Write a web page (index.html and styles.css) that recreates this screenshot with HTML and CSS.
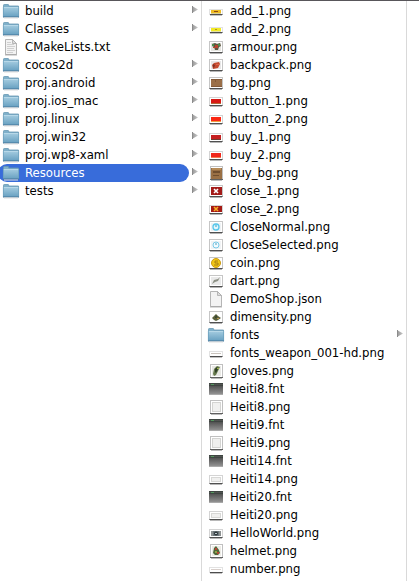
FILE: index.html
```
<!DOCTYPE html>
<html lang="en">
<head>
<meta charset="utf-8">
<title>Resources</title>
<link rel="stylesheet" href="styles.css">
</head>
<body>
<svg class="defs" aria-hidden="true">
  <defs>
    <linearGradient id="blue" x1="0" y1="0" x2="0" y2="1"><stop offset="0" stop-color="#a5cce0"/><stop offset="1" stop-color="#669fc0"/></linearGradient>
    <linearGradient id="dark" x1="0" y1="0" x2="0" y2="1"><stop offset="0" stop-color="#505050"/><stop offset=".3" stop-color="#555"/><stop offset="1" stop-color="#929292"/></linearGradient>
    <linearGradient id="grey" x1="0" y1="0" x2="1" y2="0"><stop offset="0" stop-color="#969696"/><stop offset="1" stop-color="#c8c8c8"/></linearGradient>
    <g id="folder">
      <path d="M1.500 5V3.200Q1.500 2.500 2.200 2.500H6Q6.700 2.500 6.700 3.200V4H16.500V6H1.500Z" fill="#7fb0ca" stroke="#6798b3" stroke-width=".8"/>
      <path d="M1 5H17V15H1Z" fill="url(#blue)"/>
      <path d="M1 5.500H17" stroke="#b7d8e8"/>
      <path d="M1.400 5V15M16.600 5V15" stroke="#6c9fbd" stroke-width=".8"/>
      <path d="M1 15H17" stroke="#47779a"/>
      <path d="M2 16H16" stroke="#ddd"/>
    </g>
    <g id="doc">
      <path d="M3.500 1.500H10.500L14.500 5.500V16.500H3.500Z" fill="#f3f3f3" stroke="#b5b5b5"/>
      <path d="M10.500 1.500V5.500H14.500Z" fill="#ddd" stroke="#aaa" stroke-width=".8"/>
      <path d="M3 17H15" stroke="#999" stroke-width=".7"/>
    </g>
    <g id="fnt">
      <rect x="2" y="3" width="14" height="11" fill="url(#dark)"/>
      <path d="M2 3.500H16M2 5.500H16" stroke="#3e4641"/>
      <path d="M4 4.500H7" stroke="#55985f"/>
      <path d="M2 14.500H16" stroke="#aaa"/>
    </g>
    <g id="thin"><rect x="2.500" y="7.500" width="13" height="5" fill="#fff" stroke="#e2e2e2"/><path d="M3 12.500H15.500" stroke="#4c4c4c"/><path d="M3 13.500H15" stroke="#c4c4c4"/></g>
    <g id="low"><rect x="2.500" y="5.500" width="13" height="8" fill="#fff" stroke="#d4d4d4"/><path d="M2.500 13.500H15.500" stroke="#505050"/><path d="M3 14.500H15" stroke="#b8b8b8"/></g>
    <g id="mid"><rect x="2.500" y="3.500" width="13" height="11" fill="#fff" stroke="#c6c6c6"/><path d="M2.500 14.500H15.500" stroke="#505050"/><path d="M3 15.500H15" stroke="#b4b4b4"/></g>
    <g id="tall"><rect x="3.500" y="2.500" width="12" height="13" fill="#fff" stroke="#c0c0c0"/><path d="M3 15.500H16" stroke="#606060"/><path d="M4 16.500H15" stroke="#bcbcbc"/></g>
    <g id="arrow"><path d="M0 0L6 3.500L0 7Z" fill="url(#grey)"/><path d="M.5 0V7" stroke="#8c8c8c"/></g>
  </defs>
</svg>
<main class="browser">
  <ul class="column parent">
    <li><svg class="icon" viewBox="0 0 18 18"><use href="#folder"/></svg><span>build</span><svg class="arrow" viewBox="0 0 7 7"><use href="#arrow"/></svg></li>
    <li><svg class="icon" viewBox="0 0 18 18"><use href="#folder"/></svg><span>Classes</span><svg class="arrow" viewBox="0 0 7 7"><use href="#arrow"/></svg></li>
    <li><svg class="icon" viewBox="0 0 18 18"><use href="#doc"/><path d="M5 4.500H9M5 6.500H12M5 8.500H13M5 10.500H12M5 12.500H13M5 14.500H11" stroke="#d0d0d0"/></svg><span>CMakeLists.txt</span></li>
    <li><svg class="icon" viewBox="0 0 18 18"><use href="#folder"/></svg><span>cocos2d</span><svg class="arrow" viewBox="0 0 7 7"><use href="#arrow"/></svg></li>
    <li><svg class="icon" viewBox="0 0 18 18"><use href="#folder"/></svg><span>proj.android</span><svg class="arrow" viewBox="0 0 7 7"><use href="#arrow"/></svg></li>
    <li><svg class="icon" viewBox="0 0 18 18"><use href="#folder"/></svg><span>proj.ios_mac</span><svg class="arrow" viewBox="0 0 7 7"><use href="#arrow"/></svg></li>
    <li><svg class="icon" viewBox="0 0 18 18"><use href="#folder"/></svg><span>proj.linux</span><svg class="arrow" viewBox="0 0 7 7"><use href="#arrow"/></svg></li>
    <li><svg class="icon" viewBox="0 0 18 18"><use href="#folder"/></svg><span>proj.win32</span><svg class="arrow" viewBox="0 0 7 7"><use href="#arrow"/></svg></li>
    <li><svg class="icon" viewBox="0 0 18 18"><use href="#folder"/></svg><span>proj.wp8-xaml</span><svg class="arrow" viewBox="0 0 7 7"><use href="#arrow"/></svg></li>
    <li><div class="selected"><svg class="icon" viewBox="0 0 18 18"><use href="#folder"/></svg><span>Resources</span></div><svg class="arrow" viewBox="0 0 7 7"><use href="#arrow"/></svg></li>
    <li><svg class="icon" viewBox="0 0 18 18"><use href="#folder"/></svg><span>tests</span><svg class="arrow" viewBox="0 0 7 7"><use href="#arrow"/></svg></li>
  </ul>
  <ul class="column files">
    <li><svg class="icon" viewBox="0 0 18 18"><use href="#thin"/><path d="M4 8h10v3H4z" fill="#eebb22"/><path d="M7 9h4v1H7z" fill="#8f4a12"/><path d="M4 11h10v1H4z" fill="#d9cf9a"/></svg><span>add_1.png</span></li>
    <li><svg class="icon" viewBox="0 0 18 18"><use href="#thin"/><path d="M4 8h10v3H4z" fill="#f2ea25"/><path d="M8 9h2v1H8z" fill="#b3951b"/><path d="M4 11h10v1H4z" fill="#e6e3a4"/></svg><span>add_2.png</span></li>
    <li><svg class="icon" viewBox="0 0 18 18"><use href="#mid"/><path d="M4 5h10v8H4z" fill="#e5e4df"/><path d="M5 6l3-1 2 1 3-1 1 3-2 1-1 3H8L7 9 5 8z" fill="#5b5740"/><path d="M5 6h2v2H5zM11 6h2v2h-2z" fill="#4b8d4a"/><path d="M8 7h3v3H8zM6 9h2v1H6z" fill="#b9442d"/></svg><span>armour.png</span></li>
    <li><svg class="icon" viewBox="0 0 18 18"><use href="#mid"/><path d="M4 5h10v8H4z" fill="#e7e6e6"/><path d="M5 9l2-2 5-1 1 2-2 4-5 1z" fill="#c4492d"/><path d="M6 8l2 1-1 3-1-1z" fill="#7b3026"/><path d="M9 8h3v1H9z" fill="#dd624b"/></svg><span>backpack.png</span></li>
    <li><svg class="icon" viewBox="0 0 18 18"><use href="#mid"/><path d="M4 5h11v8H4z" fill="#9b6f48"/><path d="M4 5h11v1H4zM8 6h1v2H8zM4 12h11v1H4z" fill="#855a38"/></svg><span>bg.png</span></li>
    <li><svg class="icon" viewBox="0 0 18 18"><use href="#low"/><path d="M4 7h10v4H4z" fill="#d81a15"/><path d="M4 11h10v1H4z" fill="#b36b39"/></svg><span>button_1.png</span></li>
    <li><svg class="icon" viewBox="0 0 18 18"><use href="#low"/><path d="M4 7h10v4H4z" fill="#fa2714"/><path d="M4 11h10v1H4z" fill="#f0a043"/></svg><span>button_2.png</span></li>
    <li><svg class="icon" viewBox="0 0 18 18"><use href="#low"/><path d="M4 7h10v4H4z" fill="#c51f20"/><path d="M4 11h10v1H4z" fill="#713b31"/></svg><span>buy_1.png</span></li>
    <li><svg class="icon" viewBox="0 0 18 18"><use href="#low"/><path d="M4 7h10v4H4z" fill="#f1281c"/><path d="M4 11h10v1H4z" fill="#f47b51"/></svg><span>buy_2.png</span></li>
    <li><svg class="icon" viewBox="0 0 18 18"><use href="#tall"/><path d="M4 4h11v11H4z" fill="#9a7045"/><path d="M5 4h9v2H5z" fill="#b88c58"/><path d="M6 7h7v2H6zM6 11h6v1H6z" fill="#704e2e"/></svg><span>buy_bg.png</span></li>
    <li><svg class="icon" viewBox="0 0 18 18"><use href="#mid"/><path d="M4 5h11v8H4z" fill="#a41b19"/><path d="M7 7l4 4M11 7l-4 4" stroke="#fff" stroke-width="1.600"/></svg><span>close_1.png</span></li>
    <li><svg class="icon" viewBox="0 0 18 18"><use href="#low"/><path d="M4 6h11v6H4z" fill="#a51a14"/><path d="M7 7l4 4M11 7l-4 4" stroke="#f9ad28" stroke-width="1.600"/></svg><span>close_2.png</span></li>
    <li><svg class="icon" viewBox="0 0 18 18"><use href="#mid"/><path d="M4 5h10v8H4z" fill="#eef2f4"/><circle cx="9" cy="9" r="3" fill="#e4f7fd" stroke="#54c6ec" stroke-width="1.300"/><path d="M9 7v2" stroke="#329fc0"/></svg><span>CloseNormal.png</span></li>
    <li><svg class="icon" viewBox="0 0 18 18"><use href="#mid"/><path d="M4 5h10v8H4z" fill="#f1f3f5"/><circle cx="9" cy="9" r="3" fill="#f1fbff" stroke="#79c9e8"/><path d="M9 7v2" stroke="#529ebd"/></svg><span>CloseSelected.png</span></li>
    <li><svg class="icon" viewBox="0 0 18 18"><use href="#mid"/><circle cx="9" cy="9" r="4.500" fill="#f1c716" stroke="#cc9a12"/><path d="M11 7H8v2h3v2H7" fill="none" stroke="#a67e14"/></svg><span>coin.png</span></li>
    <li><svg class="icon" viewBox="0 0 18 18"><use href="#mid"/><path d="M4 5h10v8H4z" fill="#e9e9e9"/><path d="M5 12l2-4 4-1 2-2-2 4-3 1z" fill="#8c9084"/></svg><span>dart.png</span></li>
    <li><svg class="icon" viewBox="0 0 18 18"><use href="#doc"/></svg><span>DemoShop.json</span></li>
    <li><svg class="icon" viewBox="0 0 18 18"><use href="#mid"/><path d="M5 10l2-2 2-2 2 2 3 2-3 2-2 1-2-1z" fill="#59603b"/><path d="M9 7l1 2-1 1H8z" fill="#303e2f"/><path d="M10 10h2v1h-2z" fill="#b69552"/></svg><span>dimensity.png</span></li>
    <li><svg class="icon" viewBox="0 0 18 18"><use href="#folder"/></svg><span>fonts</span><svg class="arrow" viewBox="0 0 7 7"><use href="#arrow"/></svg></li>
    <li><svg class="icon" viewBox="0 0 18 18"><use href="#thin"/><path d="M4 9.500H14" stroke="#c9c3bd"/></svg><span>fonts_weapon_001-hd.png</span></li>
    <li><svg class="icon" viewBox="0 0 18 18"><use href="#tall"/><path d="M5 4h9v10H5z" fill="#e8e8e4"/><path d="M6 12l1-5 3-3 3 1-2 4-2 4-2 1z" fill="#65794c"/><path d="M8 7l2-2 1 2-2 4-1-1z" fill="#303f29"/><path d="M10 6h2v1h-2z" fill="#a5b84e"/></svg><span>gloves.png</span></li>
    <li><svg class="icon" viewBox="0 0 18 18"><use href="#fnt"/></svg><span>Heiti8.fnt</span></li>
    <li><svg class="icon" viewBox="0 0 18 18"><use href="#tall"/><rect x="5.500" y="4.500" width="8" height="9" fill="#f0f0ef" stroke="#d4d4d2"/></svg><span>Heiti8.png</span></li>
    <li><svg class="icon" viewBox="0 0 18 18"><use href="#fnt"/></svg><span>Heiti9.fnt</span></li>
    <li><svg class="icon" viewBox="0 0 18 18"><use href="#tall"/><rect x="5.500" y="4.500" width="8" height="9" fill="#f0f0ef" stroke="#d4d4d2"/></svg><span>Heiti9.png</span></li>
    <li><svg class="icon" viewBox="0 0 18 18"><use href="#fnt"/></svg><span>Heiti14.fnt</span></li>
    <li><svg class="icon" viewBox="0 0 18 18"><use href="#low"/><rect x="4.500" y="7.500" width="9" height="4" fill="#f0f0ef" stroke="#d8d8d6"/></svg><span>Heiti14.png</span></li>
    <li><svg class="icon" viewBox="0 0 18 18"><use href="#fnt"/></svg><span>Heiti20.fnt</span></li>
    <li><svg class="icon" viewBox="0 0 18 18"><use href="#low"/><rect x="4.500" y="7.500" width="9" height="4" fill="#f0f0ef" stroke="#d8d8d6"/></svg><span>Heiti20.png</span></li>
    <li><svg class="icon" viewBox="0 0 18 18"><use href="#low"/><path d="M4 7h10v5H4z" fill="#6d777b"/><path d="M4 7h2v5H4zM12 7h2v5h-2z" fill="#8d9292"/><circle cx="9" cy="9.500" r="2" fill="#30383b"/><path d="M8 9h2v1H8z" fill="#bac8cb"/></svg><span>HelloWorld.png</span></li>
    <li><svg class="icon" viewBox="0 0 18 18"><use href="#tall"/><path d="M5 4h9v10H5z" fill="#ecebe5"/><path d="M6 11l1-5 2-2 3 4 1 3-2 2H8z" fill="#4f6839"/><path d="M8 6h2v2H8zM10 10h2v2h-2z" fill="#b74335"/><path d="M8 9h2v2H8z" fill="#8fa343"/></svg><span>helmet.png</span></li>
    <li><svg class="icon" viewBox="0 0 18 18"><use href="#thin"/><path d="M4 9.500H14" stroke="#d8cfcb"/></svg><span>number.png</span></li>
  </ul>
  <div class="column rest"></div>
</main>
</body>
</html>
```
FILE: styles.css
```
* {
  box-sizing: border-box;
}

body {
  margin: 0;
  background: #fff;
  color: #000;
  font: 13px/18px "DejaVu Sans Condensed", "Open Sans", sans-serif;
}

.defs {
  position: absolute;
  width: 0;
  height: 0;
}

.browser {
  display: grid;
  grid-template-columns: 202fr 205fr 12fr;
  height: 100vh;
  overflow: hidden;
  border-top: 1px solid #58565a;
}

.column {
  min-width: 0;
  margin: 0;
  padding: 1px 2px 0;
  list-style: none;
  border-right: 1px solid #d9d9d9;
}

.files {
  padding-left: 5px;
}

.rest {
  border-right: 0;
}

.column li {
  display: flex;
  align-items: center;
  height: 18px;
  white-space: nowrap;
}

.icon {
  flex: none;
  width: 18px;
  height: 18px;
  margin-right: 5px;
}

.arrow {
  flex: none;
  width: 7px;
  height: 7px;
  margin: 0 0 3px auto;
}

.selected {
  display: flex;
  flex: 1;
  margin: 0 3px 0 -4px;
  padding-left: 4px;
  border-radius: 9px;
  background: #386cda;
  color: #fff;
}
```
